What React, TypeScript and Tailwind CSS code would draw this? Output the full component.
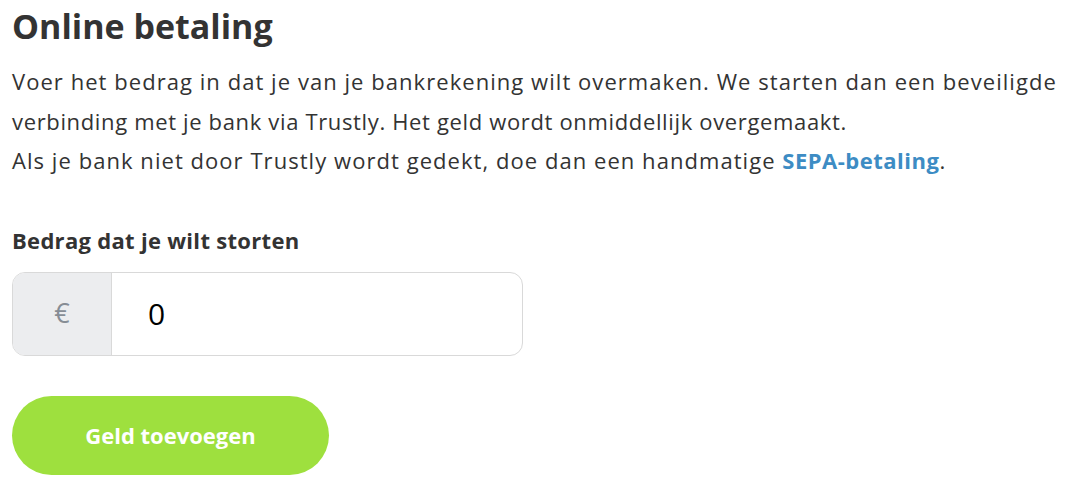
export default function App() {
  return (
    <div className="bg-white min-h-screen px-3 pt-0 text-[#333] font-['Open_Sans',sans-serif]">
      <h1 className="text-[34px] font-bold leading-[52px] text-[#333]">Online betaling</h1>
      <p className="mt-[10px] text-[22px] leading-[39.5px] whitespace-nowrap">
        <span className="tracking-[1.05px]">
          Voer het bedrag in dat je van je bankrekening wilt overmaken. We starten dan een beveiligde
        </span>
        <br />
        <span className="tracking-[0.65px]">
          verbinding met je bank via Trustly. Het geld wordt onmiddellijk overgemaakt.
        </span>
        <br />
        <span className="tracking-[1.05px]">
          Als je bank niet door Trustly wordt gedekt, doe dan een handmatige{" "}
          <a href="#" className="font-bold tracking-[0.5px] text-[#3d8cc4]">SEPA-betaling</a>.
        </span>
      </p>
      <label className="block mt-[47px] text-[22px] tracking-[0.3px] font-bold leading-6">
        Bedrag dat je wilt storten
      </label>
      <div className="mt-[20px] flex w-[511px] h-[84px] border border-[#d9d9d9] rounded-[13px] overflow-hidden">
        <div className="w-[99px] flex items-center justify-center bg-[#ecedef] border-r border-[#d9d9d9] text-[27px] text-[#878d95]">
          €
        </div>
        <input
          defaultValue="0"
          className="flex-1 min-w-0 pl-[36px] text-[30px] text-black outline-none font-['Open_Sans',sans-serif]"
        />
      </div>
      <button className="mt-[40px] w-[317px] h-[79px] rounded-full bg-[#9ee03e] text-white text-[22px] font-bold">
        Geld toevoegen
      </button>
    </div>
  );
}
